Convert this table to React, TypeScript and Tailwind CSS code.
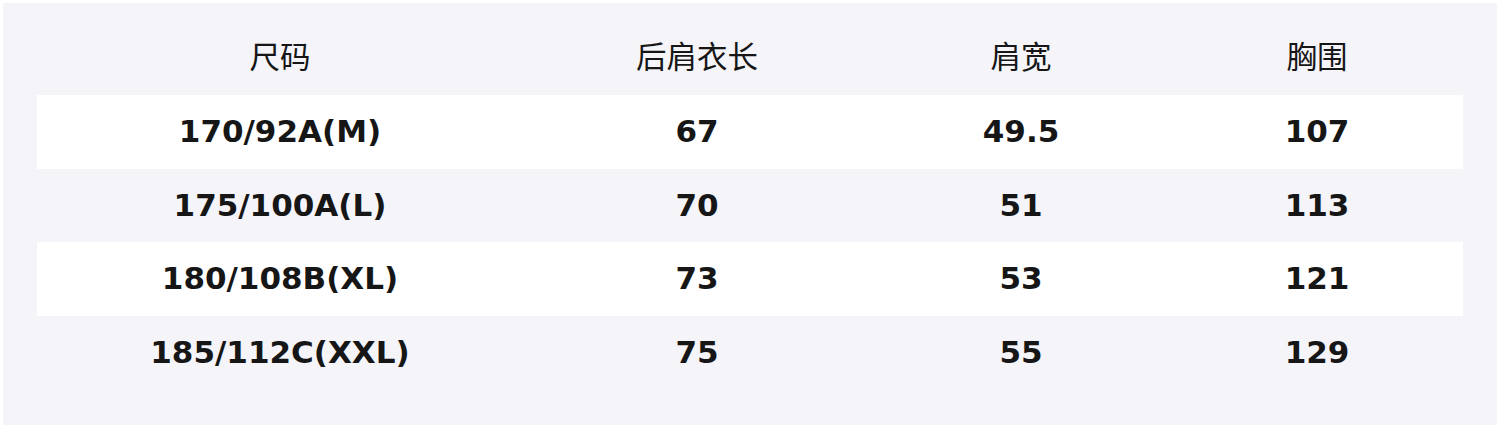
const headers = ['尺码', '后肩衣长', '肩宽', '胸围'];

const rows = [
  ['170/92A(M)', '67', '49.5', '107'],
  ['175/100A(L)', '70', '51', '113'],
  ['180/108B(XL)', '73', '53', '121'],
  ['185/112C(XXL)', '75', '55', '129'],
];

const cols = 'grid grid-cols-[486px_348px_300px_292px] h-[73.5px] items-center text-center';

export default function App() {
  return (
    <div className="h-[428px] w-[1500px] bg-white p-[3px]">
      <div className="h-full w-full bg-[#f4f4f9] px-[34px] pt-[18.5px] text-[#161616]">
        <div className={cols} style={{ fontFamily: '"Noto Sans CJK SC", "Noto Sans", sans-serif' }}>
          {headers.map((h) => (
            <div key={h} className="-mt-[6px] text-[30.5px] font-normal leading-none">
              {h}
            </div>
          ))}
        </div>
        {rows.map((r, i) => (
          <div
            key={r[0]}
            className={`${cols} ${i % 2 === 0 ? 'bg-white' : ''}`}
            style={{ fontFamily: '"DejaVu Sans", sans-serif' }}
          >
            {r.map((c, j) => (
              <div key={j} className="text-[31px] font-bold leading-none">
                {c}
              </div>
            ))}
          </div>
        ))}
      </div>
    </div>
  );
}
